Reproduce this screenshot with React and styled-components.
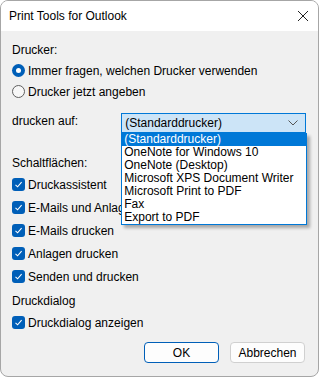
import React from "react";
import styled, { createGlobalStyle } from "styled-components";

const Global = createGlobalStyle`
  html, body { margin: 0; padding: 0; background: #ffffff; }
  body { font-family: "Liberation Sans", Arial, sans-serif; font-size: 12px; color: #000; }
`;

const Window = styled.div`
  position: relative;
  width: 319px;
  height: 377px;
  box-sizing: border-box;
  border: 1px solid #a6a6a6;
  border-radius: 8px;
  background: #f0f0f0;
  overflow: hidden;
  display: flex;
  flex-direction: column;
`;

const TitleBar = styled.div`
  height: 30px;
  background: #ffffff;
  display: flex;
  align-items: center;
  justify-content: space-between;
  padding: 0 9px 0 8px;
  font-size: 12px;
`;

const Body = styled.div`
  flex: 1;
  display: flex;
  flex-direction: column;
  padding: 0 12px 0 11px;
`;

const Label = styled.div`
  line-height: 16px;
  margin-top: ${(p) => p.$top || 0}px;
`;

const Row = styled.label`
  display: flex;
  align-items: center;
  gap: 3px;
  height: ${(p) => p.$h || 23}px;
  white-space: nowrap;
`;

const RadioDot = styled.span`
  width: 13px;
  height: 13px;
  box-sizing: border-box;
  border-radius: 50%;
  flex: none;
  ${(p) =>
    p.$on
      ? `background: #005fb8; display:flex; align-items:center; justify-content:center;
         &::after { content: ""; width: 5px; height: 5px; border-radius: 50%; background: #fff; }`
      : `border: 1px solid #5f5f5f; background: #f7f7f7;`}
`;

const Check = styled.span`
  width: 13px;
  height: 13px;
  border-radius: 3px;
  background: #005fb8;
  flex: none;
  display: flex;
  align-items: center;
  justify-content: center;
`;

const ComboRow = styled.div`
  display: flex;
  align-items: flex-start;
  margin-top: 11px;
`;

const ComboLabel = styled.div`
  width: 110px;
  line-height: 16px;
`;

const ComboWrap = styled.div`
  position: relative;
  width: 186px;
`;

const Combo = styled.div`
  height: 20px;
  box-sizing: border-box;
  border: 1px solid #0078d7;
  background: #cce4f7;
  display: flex;
  align-items: center;
  justify-content: space-between;
  padding: 0 7px 0 3px;
`;

const List = styled.ul`
  position: absolute;
  top: 20px;
  left: 0;
  width: 186px;
  box-sizing: border-box;
  margin: 0;
  padding: 0;
  list-style: none;
  background: #ffffff;
  border: 1px solid #0078d7;
  border-top: none;
  box-shadow: 3px 3px 3px rgba(0, 0, 0, 0.3);
  z-index: 2;
`;

const Item = styled.li`
  height: 13px;
  line-height: 13px;
  padding-left: 2px;
  white-space: nowrap;
  background: ${(p) => (p.$sel ? "#0078d7" : "transparent")};
  color: ${(p) => (p.$sel ? "#fff" : "#000")};
`;

const Buttons = styled.div`
  display: flex;
  justify-content: flex-end;
  gap: 11px;
  margin-top: 8px;
  padding-right: 1px;
`;

const Button = styled.button`
  width: 75px;
  height: 21px;
  box-sizing: border-box;
  border-radius: 4px;
  border: 1px solid ${(p) => (p.$primary ? "#005fb8" : "#d0d0d0")};
  background: #fdfdfd;
  font-family: inherit;
  font-size: 12px;
  color: #000;
  padding: 0;
`;

const Tick = () => (
  <svg width="9" height="9" viewBox="0 0 9 9">
    <path d="M1.5 4.8 L3.6 6.8 L7.6 2.2" fill="none" stroke="#fff" strokeWidth="1.1" />
  </svg>
);

const options = [
  "(Standarddrucker)",
  "OneNote for Windows 10",
  "OneNote (Desktop)",
  "Microsoft XPS Document Writer",
  "Microsoft Print to PDF",
  "Fax",
  "Export to PDF",
];

const checks = [
  "Druckassistent",
  "E-Mails und Anlagen",
  "E-Mails drucken",
  "Anlagen drucken",
  "Senden und drucken",
];

export default function App() {
  return (
    <>
      <Global />
      <Window>
        <TitleBar>
          <span>Print Tools for Outlook</span>
          <svg width="12" height="12" viewBox="0 0 12 12">
            <path d="M1 1 L11 11 M11 1 L1 11" stroke="#222" strokeWidth="1" />
          </svg>
        </TitleBar>
        <Body>
          <Label $top={11}>Drucker:</Label>
          <Row $h={21} style={{ marginTop: 2 }}>
            <RadioDot $on />
            Immer fragen, welchen Drucker verwenden
          </Row>
          <Row $h={21}>
            <RadioDot />
            Drucker jetzt angeben
          </Row>
          <ComboRow>
            <ComboLabel>drucken auf:</ComboLabel>
            <ComboWrap>
              <Combo>
                <span>(Standarddrucker)</span>
                <svg width="10" height="6" viewBox="0 0 10 6">
                  <path d="M0.5 0.5 L5 5 L9.5 0.5" fill="none" stroke="#555" strokeWidth="1" />
                </svg>
              </Combo>
              <List>
                {options.map((o, i) => (
                  <Item key={o} $sel={i === 0}>{o}</Item>
                ))}
              </List>
            </ComboWrap>
          </ComboRow>
          <Label $top={22}>Schaltflächen:</Label>
          <div style={{ height: 2 }} />
          {checks.map((c) => (
            <Row key={c}>
              <Check><Tick /></Check>
              {c}
            </Row>
          ))}
          <Label $top={5}>Druckdialog</Label>
          <Row style={{ marginTop: 2 }}>
            <Check><Tick /></Check>
            Druckdialog anzeigen
          </Row>
          <Buttons>
            <Button $primary>OK</Button>
            <Button>Abbrechen</Button>
          </Buttons>
        </Body>
      </Window>
    </>
  );
}
